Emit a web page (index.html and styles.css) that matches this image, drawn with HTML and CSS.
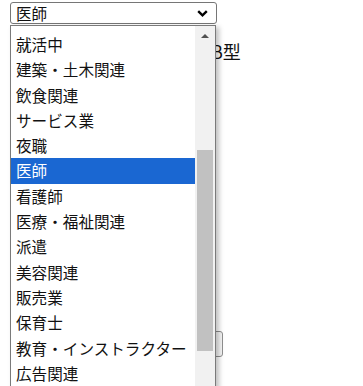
FILE: index.html
```html
<!DOCTYPE html>
<html>
  <head>
    <title>職業</title>
    <link rel="stylesheet" href="styles.css">
  </head>
  <body>
    <div id="page">
      <div class="select">
        <span class="select-value">医師</span>
        <svg class="chevron" width="11" height="7" viewBox="0 0 11 7">
          <path d="M1.2 1.2 L5.5 5.3 L9.8 1.2" fill="none" stroke="#000" stroke-width="2.4" />
        </svg>
      </div>
      <!-- form content behind the open list -->
      <div class="form">
        <div class="blood">B型</div>
        <div class="submit-row">
          <button class="submit"></button>
        </div>
      </div>
      <!-- open dropdown list -->
      <div class="dropdown">
        <ul class="options">
          <li>就活中</li>
          <li>建築・土木関連</li>
          <li>飲食関連</li>
          <li>サービス業</li>
          <li>夜職</li>
          <li class="selected">医師</li>
          <li>看護師</li>
          <li>医療・福祉関連</li>
          <li>派遣</li>
          <li>美容関連</li>
          <li>販売業</li>
          <li>保育士</li>
          <li>教育・インストラクター</li>
          <li>広告関連</li>
        </ul>
        <div class="scrollbar">
          <span class="arrow-up"></span>
          <span class="thumb"></span>
        </div>
      </div>
    </div>
  </body>
</html>
```

FILE: styles.css
```css
/* page */
body {
  margin: 0;
  padding: 0;
  background-color: white;
  font-family: "Noto Sans CJK JP", "Noto Sans", sans-serif;
  color: #111;
  overflow: hidden;
}
#page {
  position: relative;
  height: 386px;
  padding: 2px 0 0 10px;
  box-sizing: border-box;
}
/* closed select */
.select {
  width: 207px;
  height: 22px;
  box-sizing: border-box;
  border: 1px solid #767676;
  border-radius: 3px;
  display: flex;
  align-items: center;
  justify-content: space-between;
  padding: 0 8px 0 5px;
  font-size: 15.6px;
  line-height: 20px;
}
.chevron {
  display: block;
}
/* form behind */
.form {
  display: flex;
  flex-direction: column;
}
.blood {
  padding: 16px 0 0 201px;
  font-size: 18px;
  line-height: 22px;
}
.submit-row {
  padding: 269px 0 0 90px;
}
.submit {
  display: block;
  width: 123px;
  height: 26px;
  border: 1px solid #8f8f8f;
  border-radius: 3px;
  background-color: #f6f6f6;
}
/* dropdown */
.dropdown {
  position: absolute;
  left: 10px;
  top: 25px;
  width: 206px;
  height: 380px;
  box-sizing: border-box;
  border: 1px solid #7a7a7a;
  background-color: white;
  box-shadow: 3px 2px 5px rgba(0, 0, 0, 0.25);
  display: flex;
  overflow: hidden;
}
.options {
  flex: 1;
  list-style: none;
  margin: 0;
  padding: 6px 0 0 0;
  font-size: 15.6px;
}
.options li {
  height: 25.3px;
  line-height: 25.3px;
  padding-left: 5px;
  white-space: nowrap;
}
.options li.selected {
  background-color: #1a67d2;
  color: white;
}
.scrollbar {
  width: 20px;
  background-color: #f1f1f1;
  display: flex;
  flex-direction: column;
  align-items: center;
}
.arrow-up {
  margin-top: 8px;
  width: 0;
  height: 0;
  border-left: 4px solid transparent;
  border-right: 4px solid transparent;
  border-bottom: 4px solid #505050;
}
.thumb {
  margin-top: 112px;
  width: 16px;
  height: 201px;
  background-color: #c1c1c1;
}
```
